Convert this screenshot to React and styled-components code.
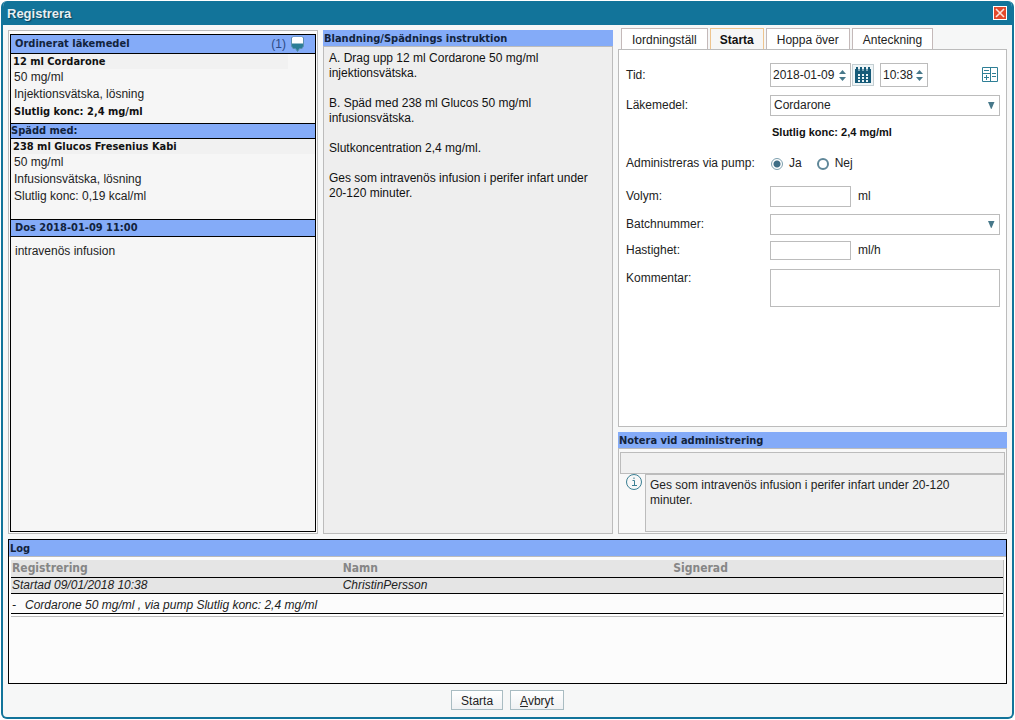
import React from "react";
import styled, { createGlobalStyle, css } from "styled-components";

const sans = `"Liberation Sans", Arial, sans-serif`;
const heading = `"DejaVu Sans Condensed", "DejaVu Sans", Tahoma, sans-serif`;
const teal = "#12749a";
const line = "#bcbcbc";
const blue = "#84abf8";

const GlobalStyle = createGlobalStyle`
  * { box-sizing: border-box; }
  body { margin: 0; background: #fff; }
  button, input, select, textarea { font: inherit; color: inherit; margin: 0; border-radius: 0; }
`;

const Page = styled.div`
  min-height: 100vh;
  padding: 1px;
  display: flex;
  font: 12px/15px ${sans};
  color: #222;
`;

const Dialog = styled.div`
  flex: 1;
  min-width: 0;
  display: flex;
  flex-direction: column;
  border: 2px solid ${teal};
  border-top: 0;
  border-radius: 6px;
  background: #f6f7f7;
  overflow: hidden;
`;

const TitleBar = styled.header`
  height: 24px;
  padding: 0 5px 0 4px;
  display: flex;
  align-items: center;
  justify-content: space-between;
  background: ${teal};
`;

const Title = styled.h1`
  margin: 2px 0 0;
  font-size: 13px;
  line-height: 16px;
  font-weight: bold;
  color: #e6eff2;
  text-shadow: 1px 1px 1px #0a3f58;
`;

const CloseButton = styled.button`
  width: 14px;
  height: 14px;
  padding: 0;
  border: 1px solid #fff;
  background: #e2492c;
  display: flex;
`;

const Content = styled.main`
  flex: 1;
  display: flex;
  flex-direction: column;
  gap: 5px;
  padding: 5px 5px 0;
`;

const Columns = styled.div`
  flex: 1;
  display: grid;
  grid-template-columns: minmax(0, 310fr) minmax(0, 290fr) minmax(0, 389fr);
  gap: 5px;
`;

const SectionTitle = styled.h2`
  margin: 0;
  padding-left: 1px;
  height: 16px;
  font: bold 11px/17px ${heading};
  color: #12233c;
  background: ${blue};
`;

/* Ordered medication */

const OrderFrame = styled.section`
  border: 1px solid ${line};
  padding: 3px 1px 1px;
  display: flex;
  background: #fcfcfc;
`;

const Order = styled.div`
  flex: 1;
  border: 1px solid #000;
  background: #f6f6f6;
`;

const OrderHeader = styled.div`
  height: ${(p) => p.$height}px;
  padding: 0 11px 0 ${(p) => (p.$flush ? 0 : 4)}px;
  display: flex;
  align-items: center;
  justify-content: space-between;
  background: ${blue};
  border: solid #000;
  border-width: ${(p) => (p.$first ? "0 0 1px" : "1px 0")};
`;

const OrderTitle = styled.h2`
  margin: 0;
  font: bold 11px/14px ${heading};
  color: #12233c;
`;

const Count = styled.span`
  display: flex;
  align-items: center;
  gap: 5px;
  color: #2c4a86;
`;

const Drug = styled.div`
  padding-bottom: ${(p) => p.$bottom}px;
`;

const DrugName = styled.div`
  height: 15px;
  padding-left: 2px;
  margin-right: ${(p) => p.$right}px;
  background: #f1f1f1;
  font: bold 11px/15px ${heading};
  color: #111;
`;

const DrugLine = styled.div`
  padding-left: 3px;
  line-height: 17px;
  ${(p) => p.$strong && css`font: bold 11px/17px ${heading}; color: #111;`}
`;

const DoseText = styled.div`
  padding: 7px 4px;
`;

/* Mixing instruction */

const Instruction = styled.section`
  display: flex;
  flex-direction: column;
`;

const InstructionBody = styled.div`
  flex: 1;
  padding: 4px 5px;
  border: 1px solid ${line};
  background: #eee;
  color: #111;
  p { margin: 0 0 15px; }
`;

/* Registration form */

const Side = styled.div`
  display: flex;
  flex-direction: column;
  gap: 5px;
  margin-top: -2px;
`;

const TabArea = styled.section`
  flex: 1;
  display: flex;
  flex-direction: column;
`;

const TabList = styled.div`
  display: flex;
  gap: 2px;
  padding-left: 3px;
`;

const Tab = styled.button`
  height: 21px;
  padding: 2px 10px 0;
  border: 1px solid #c4b9b9;
  border-bottom: 0;
  background: #fff;
  ${(p) => p.$active && css`
    padding: 2px 9px 0;
    background: #f6f6f6;
    border-color: #eec48e;
    font-weight: bold;
    color: #111;
  `}
`;

const Form = styled.form`
  flex: 1;
  padding: 13px 6px 0 7px;
  border: 1px solid ${line};
  background: #fff;
`;

const Row = styled.div`
  display: grid;
  grid-template-columns: 144px minmax(0, 1fr);
  align-items: ${(p) => (p.$top ? "start" : "center")};
  margin-bottom: ${(p) => p.$gap}px;
`;

const Label = styled.label`
  padding: ${(p) => (p.$top ? "2px 0 0" : "0")};
`;

const Cell = styled.div`
  display: flex;
  align-items: center;
`;

const SpinBox = styled.span`
  width: ${(p) => p.$width}px;
  height: 24px;
  margin-right: ${(p) => p.$gap}px;
  display: flex;
  align-items: center;
  border: 1px solid ${line};
  background: #fff;
`;

const SpinInput = styled.input`
  flex: 1;
  min-width: 0;
  padding: 0 0 0 2px;
  border: 0;
  outline: 0;
  background: none;
`;

const SpinButtons = styled.span`
  display: flex;
  flex-direction: column;
  gap: 3px;
  padding: 0 4px 0 0;
  button {
    display: flex;
    padding: 0;
    border: 0;
    background: none;
  }
`;

const IconButton = styled.button`
  width: 22px;
  height: 22px;
  margin-right: 6px;
  padding: 0;
  display: flex;
  align-items: center;
  justify-content: center;
  border: 1px solid #c3ced2;
  background: #eff5f7;
`;

const CalcButton = styled.button`
  margin: 0 2px 2px auto;
  padding: 0;
  border: 0;
  background: none;
  display: flex;
`;

const SelectBox = styled.span`
  flex: 1;
  display: grid;
  align-items: center;
  > * { grid-area: 1 / 1; }
  > svg {
    justify-self: end;
    margin-right: 5px;
    pointer-events: none;
  }
`;

const Select = styled.select`
  appearance: none;
  width: 100%;
  height: 21px;
  padding: 0 20px 0 3px;
  border: 1px solid ${line};
  background: #fff;
`;

const Concentration = styled.div`
  padding-left: 146px;
  margin-bottom: 16px;
  font-size: 11px;
  line-height: 15px;
  font-weight: bold;
  color: #111;
`;

const RadioLabel = styled.label`
  display: flex;
  align-items: center;
  gap: 6px;
  margin-right: 15px;
`;

const Radio = styled.input`
  appearance: none;
  width: 12px;
  height: 12px;
  border: 2px solid #5f8799;
  border-radius: 50%;
  &:checked {
    border: 1px solid #7d9fae;
    background: radial-gradient(circle, #3f6e86 0 3px, #fff 4px);
  }
`;

const RadioCell = styled(Cell)`
  padding-left: 1px;
`;

const ShortInput = styled.input`
  width: 81px;
  height: ${(p) => p.$height}px;
  margin-right: 7px;
  border: 1px solid ${line};
  background: #fff;
`;

const Comment = styled.textarea`
  display: block;
  width: 100%;
  height: 38px;
  resize: none;
  border: 1px solid ${line};
  background: #fff;
`;

const Note = styled.section``;

const NoteBody = styled.div`
  height: 86px;
  padding: 3px 1px 1px;
  display: grid;
  grid-template: 22px 1fr / 25px minmax(0, 1fr);
  border: 1px solid ${line};
  background: #f8f8f8;
`;

const NoteInput = styled.input`
  grid-column: 1 / 3;
  width: 100%;
  border: 1px solid ${line};
  background: #f0f0f0;
`;

const NoteIcon = styled.span`
  padding-left: 6px;
`;

const NoteText = styled.div`
  padding: 3px 24px 3px 4px;
  border: 1px solid ${line};
  background: #f0f0f0;
`;

/* Log */

const Log = styled.section`
  height: 145px;
  border: 1px solid #000;
  background: #fcfcfc;
`;

const LogTitle = styled(SectionTitle)`
  height: 17px;
  border-bottom: 1px solid ${line};
`;

const LogFrame = styled.div`
  margin: 3px 2px 0;
  padding-bottom: 2px;
  border: solid ${line};
  border-width: 0 1px 1px 0;
  background: #fff;
`;

const LogTable = styled.table`
  width: 100%;
  table-layout: fixed;
  border-collapse: separate;
  border-spacing: 0;
  font-size: 12px;
`;

const LogHead = styled.th`
  height: 18px;
  padding: 0 1px;
  text-align: left;
  font: bold 12px/17px ${heading};
  color: #868686;
  background: #e5e5e5;
  border-bottom: 1px solid #000;
`;

const LogCell = styled.td`
  height: ${(p) => p.$height}px;
  padding: ${(p) => (p.$detail ? "4px 1px 0" : "0 1px")};
  font-style: italic;
  line-height: 15px;
  background: ${(p) => p.$bg};
  border-bottom: 1px solid #000;
`;

const Dash = styled.span`
  display: inline-block;
  width: 13px;
`;

const Footer = styled.footer`
  height: 28px;
  padding-top: 1px;
  display: flex;
  justify-content: center;
  gap: 7px;
`;

const FooterButton = styled.button`
  height: 20px;
  padding: 2px 9px 0;
  border: 1px solid #a9bcc2;
  background: linear-gradient(#fff, #eff1f3);
`;

const Arrow = ({ up }) => (
  <svg width="7" height="4" viewBox="0 0 7 4">
    <path d={up ? "M3.500 0 7 4H0Z" : "M0 0H7L3.500 4Z"} fill="#47788a" />
  </svg>
);

const DropArrow = () => (
  <svg width="8" height="7" viewBox="0 0 8 7">
    <path d="M1 0H7.500L4.500 7H4Z" fill="#47788a" />
  </svg>
);

const Spinner = ({ id, label, value, width, gap }) => (
  <SpinBox $width={width} $gap={gap}>
    <SpinInput id={id} aria-label={label} defaultValue={value} />
    <SpinButtons>
      <button type="button" aria-label={`${label} upp`}><Arrow up /></button>
      <button type="button" aria-label={`${label} ner`}><Arrow /></button>
    </SpinButtons>
  </SpinBox>
);

const DropDown = ({ id, options }) => (
  <SelectBox>
    <Select id={id}>
      {options.map((o) => <option key={o}>{o}</option>)}
    </Select>
    <DropArrow />
  </SelectBox>
);

export default function App() {
  return (
    <Page>
      <GlobalStyle />
      <Dialog role="dialog" aria-labelledby="dialog-title">
        <TitleBar>
          <Title id="dialog-title">Registrera</Title>
          <CloseButton aria-label="Stäng">
            <svg width="12" height="12" viewBox="0 0 12 12">
              <path d="M2 2 10 10M10 2 2 10" stroke="#fbe3dc" strokeWidth="1.6" />
            </svg>
          </CloseButton>
        </TitleBar>
        <Content>
          <Columns>
            <OrderFrame>
              <Order>
                <OrderHeader $height={19} $first>
                  <OrderTitle>Ordinerat läkemedel</OrderTitle>
                  <Count>
                    (1)
                    <svg width="13" height="16" viewBox="0 0 13 16">
                      <path d="M1.500 1H11.500L12.500 2V10L11 12.500H8.500L6.500 15.500L4.500 12.500H2L.5 10V2Z" fill="#2c7d96" stroke="#5c8fae" />
                      <path d="M2 1H11L12 2V7.500H1V2Z" fill="#fff" />
                    </svg>
                  </Count>
                </OrderHeader>
                <Drug $bottom={3}>
                  <DrugName $right={27}>12 ml Cordarone</DrugName>
                  <DrugLine>50 mg/ml</DrugLine>
                  <DrugLine>Injektionsvätska, lösning</DrugLine>
                  <DrugLine $strong>Slutlig konc: 2,4 mg/ml</DrugLine>
                </Drug>
                <OrderHeader $height={16} $flush>
                  <OrderTitle>Spädd med:</OrderTitle>
                </OrderHeader>
                <Drug $bottom={14}>
                  <DrugName $right={0}>238 ml Glucos Fresenius Kabi</DrugName>
                  <DrugLine>50 mg/ml</DrugLine>
                  <DrugLine>Infusionsvätska, lösning</DrugLine>
                  <DrugLine>Slutlig konc: 0,19 kcal/ml</DrugLine>
                </Drug>
                <OrderHeader $height={18}>
                  <OrderTitle>Dos 2018-01-09 11:00</OrderTitle>
                </OrderHeader>
                <DoseText>intravenös infusion</DoseText>
              </Order>
            </OrderFrame>

            <Instruction>
              <SectionTitle>Blandning/Spädnings instruktion</SectionTitle>
              <InstructionBody>
                <p>A. Drag upp 12 ml Cordarone 50 mg/ml<br />injektionsvätska.</p>
                <p>B. Späd med 238 ml Glucos 50 mg/ml<br />infusionsvätska.</p>
                <p>Slutkoncentration 2,4 mg/ml.</p>
                <p>Ges som intravenös infusion i perifer infart under 20-120 minuter.</p>
              </InstructionBody>
            </Instruction>

            <Side>
              <TabArea>
                <TabList role="tablist">
                  <Tab role="tab">Iordningställ</Tab>
                  <Tab role="tab" aria-selected="true" $active>Starta</Tab>
                  <Tab role="tab">Hoppa över</Tab>
                  <Tab role="tab">Anteckning</Tab>
                </TabList>
                <Form>
                  <Row $gap={8}>
                    <Label htmlFor="date">Tid:</Label>
                    <Cell>
                      <Spinner id="date" label="Datum" value="2018-01-09" width={81} gap={1} />
                      <IconButton type="button" aria-label="Kalender">
                        <svg width="16" height="16" viewBox="0 0 16 16">
                          <path d="M0 2H16V16H0Z" fill="#155a78" />
                          <path d="M2 0V3M6 0V3M10 0V3M14 0V3" stroke="#155a78" strokeWidth="2" />
                          <path d="M4 1V4M8 1V4M12 1V4" stroke="#e4eff3" strokeWidth="1" />
                          <path d="M3 7H5V9H3ZM7 7H9V9H7ZM11 7H13V9H11ZM3 10H5V12H3ZM7 10H9V12H7ZM11 10H13V12H11ZM3 13H5V15H3ZM7 13H9V15H7ZM11 13H13V15H11Z" fill="#eaf3f6" />
                        </svg>
                      </IconButton>
                      <Spinner id="time" label="Klockslag" value="10:38" width={48} gap={0} />
                      <CalcButton type="button" aria-label="Kalkylator">
                        <svg width="16" height="15" viewBox="0 0 16 15" fill="none" stroke="#2f7f96">
                          <path d="M.5 .5H15.500V14.500H.5ZM8.500 0V15M0 6.500H8.500M2 3.500H7M2 10.500H7M4.500 8V13M10 6.500H14M10 9.500H14" />
                        </svg>
                      </CalcButton>
                    </Cell>
                  </Row>
                  <Row $gap={9}>
                    <Label htmlFor="drug">Läkemedel:</Label>
                    <Cell><DropDown id="drug" options={["Cordarone"]} /></Cell>
                  </Row>
                  <Concentration>Slutlig konc: 2,4 mg/ml</Concentration>
                  <Row $gap={15}>
                    <Label as="span">Administreras via pump:</Label>
                    <RadioCell role="radiogroup" aria-label="Administreras via pump">
                      <RadioLabel><Radio type="radio" name="pump" defaultChecked />Ja</RadioLabel>
                      <RadioLabel><Radio type="radio" name="pump" />Nej</RadioLabel>
                    </RadioCell>
                  </Row>
                  <Row $gap={7}>
                    <Label htmlFor="volume">Volym:</Label>
                    <Cell><ShortInput id="volume" $height={21} />ml</Cell>
                  </Row>
                  <Row $gap={6}>
                    <Label htmlFor="batch">Batchnummer:</Label>
                    <Cell><DropDown id="batch" options={[""]} /></Cell>
                  </Row>
                  <Row $gap={9}>
                    <Label htmlFor="rate">Hastighet:</Label>
                    <Cell><ShortInput id="rate" $height={19} />ml/h</Cell>
                  </Row>
                  <Row $gap={0} $top>
                    <Label htmlFor="comment" $top>Kommentar:</Label>
                    <Comment id="comment" />
                  </Row>
                </Form>
              </TabArea>
              <Note>
                <SectionTitle>Notera vid administrering</SectionTitle>
                <NoteBody>
                  <NoteInput aria-label="Notering" readOnly />
                  <NoteIcon>
                    <svg width="16" height="16" viewBox="0 0 16 16" fill="none" stroke="#3b7f93">
                      <circle cx="8" cy="8" r="7.500" />
                      <path d="M6.500 6.500H8.500V11.500M6 11.500H11M8 3.500V5" />
                    </svg>
                  </NoteIcon>
                  <NoteText>Ges som intravenös infusion i perifer infart under 20-120 minuter.</NoteText>
                </NoteBody>
              </Note>
            </Side>
          </Columns>

          <Log>
            <LogTitle>Log</LogTitle>
            <LogFrame>
              <LogTable>
                <thead>
                  <tr>
                    <LogHead>Registrering</LogHead>
                    <LogHead>Namn</LogHead>
                    <LogHead>Signerad</LogHead>
                  </tr>
                </thead>
                <tbody>
                  <tr>
                    <LogCell $height={16} $bg="#e5e5e5">Startad 09/01/2018 10:38</LogCell>
                    <LogCell $height={16} $bg="#e5e5e5">ChristinPersson</LogCell>
                    <LogCell $height={16} $bg="#e5e5e5" />
                  </tr>
                  <tr>
                    <LogCell $height={20} $bg="#fcfcfc" $detail colSpan={3}>
                      <Dash>-</Dash>Cordarone 50 mg/ml , via pump Slutlig konc: 2,4 mg/ml
                    </LogCell>
                  </tr>
                </tbody>
              </LogTable>
            </LogFrame>
          </Log>
          <Footer>
            <FooterButton>Starta</FooterButton>
            <FooterButton><u>A</u>vbryt</FooterButton>
          </Footer>
        </Content>
      </Dialog>
    </Page>
  );
}
